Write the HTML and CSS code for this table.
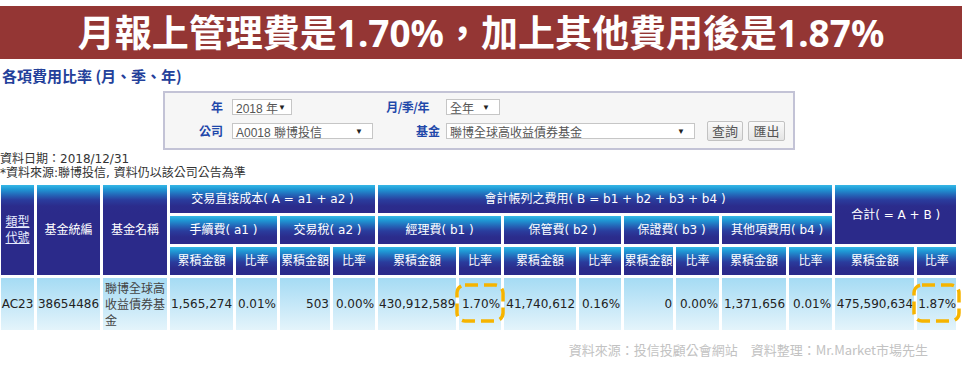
FILE: index.html
```html
<!DOCTYPE html>
<html lang="zh-Hant">
<head>
<meta charset="utf-8">
<title>各項費用比率</title>
<link rel="stylesheet" href="styles.css">
</head>
<body>
<div class="titlebar">月報上管理費是1.70%，加上其他費用後是1.87%</div>
<h2 class="heading">各項費用比率 (月、季、年)</h2>
<div class="formbox">
  <span class="flabel">年</span>
  <div><div class="sel sel-year"><span>2018 年</span><i>▼</i></div></div>
  <span class="flabel flabel-period">月/季/年</span>
  <div><div class="sel sel-period"><span>全年</span><i>▼</i></div></div>
  <span class="flabel">公司</span>
  <div><div class="sel sel-company"><span>A0018 聯博投信</span><i>▼</i></div></div>
  <span class="flabel flabel-fund">基金</span>
  <div class="fund-row">
    <div class="sel sel-fund"><span>聯博全球高收益債券基金</span><i>▼</i></div>
    <button class="btn btn-query">查詢</button>
    <button class="btn btn-export">匯出</button>
  </div>
</div>
<div class="meta">
  <div>資料日期：2018/12/31</div>
  <div>*資料來源:聯博投信, 資料仍以該公司公告為準</div>
</div>
<div class="table-wrap">
  <table class="fees"><colgroup><col class="c33"><col class="c63"><col class="c64"><col class="c63"><col class="c41"><col class="c50"><col class="c42"><col class="c78"><col class="c42"><col class="c72"><col class="c42"><col class="c49"><col class="c43"><col class="c64"><col class="c43"><col class="c79"><col class="c41"></colgroup><thead><tr><th rowspan="3"><a class="hlink" href="#">類型<br>代號</a></th><th rowspan="3">基金統編</th><th rowspan="3">基金名稱</th><th colspan="4">交易直接成本( A = a1 + a2 )</th><th colspan="8">會計帳列之費用( B = b1 + b2 + b3 + b4 )</th><th colspan="2" rowspan="2">合計( = A + B )</th></tr><tr><th colspan="2">手續費( a1 )</th><th colspan="2">交易稅( a2 )</th><th colspan="2">經理費( b1 )</th><th colspan="2">保管費( b2 )</th><th colspan="2">保證費( b3 )</th><th colspan="2">其他項費用( b4 )</th></tr><tr><th>累積金額</th><th>比率</th><th>累積金額</th><th>比率</th><th>累積金額</th><th>比率</th><th>累積金額</th><th>比率</th><th>累積金額</th><th>比率</th><th>累積金額</th><th>比率</th><th>累積金額</th><th>比率</th><th>累積金額</th><th>比率</th></tr></thead><tbody><tr><td class="ctr">AC23</td><td class="ctr">38654486</td><td class="name">聯博全球高收益債券基金</td><td>1,565,274</td><td>0.01%</td><td>503</td><td>0.00%</td><td>430,912,589</td><td>1.70%</td><td>41,740,612</td><td>0.16%</td><td>0</td><td>0.00%</td><td>1,371,656</td><td>0.01%</td><td>475,590,634</td><td>1.87%</td></tr></tbody></table>
  <svg class="mark mark-1" width="50" height="40" viewBox="0 0 50 40"><rect x="2" y="2" width="46" height="36" rx="8" ry="8" fill="none" stroke="#f6b400" stroke-width="3.5" stroke-dasharray="13 6"/></svg>
  <svg class="mark mark-2" width="49" height="40" viewBox="0 0 49 40"><rect x="2" y="2" width="45" height="36" rx="8" ry="8" fill="none" stroke="#f6b400" stroke-width="3.5" stroke-dasharray="13 6"/></svg>
</div>
<div class="footer">資料來源：投信投顧公會網站　資料整理：Mr.Market市場先生</div>
</body>
</html>
```

FILE: styles.css
```css
* { box-sizing: border-box; }
html, body { margin: 0; padding: 0; background: #fff; }
body {
  font-family: "DejaVu Sans", "Noto Sans CJK TC", sans-serif;
  font-size: 12px;
  color: #333;
}

.titlebar {
  margin-top: 6px;
  height: 53px;
  background: #943634;
  color: #fff;
  font-family: "Noto Sans", "Noto Sans CJK TC", sans-serif;
  font-weight: 700;
  font-size: 37px;
  line-height: 53px;
  text-align: center;
  white-space: nowrap;
}

.heading {
  margin: 9px 0 0 2px;
  font-family: "Noto Sans CJK TC", sans-serif;
  font-size: 15px;
  font-weight: 700;
  line-height: 16px;
  color: #23409a;
}

.formbox {
  margin: 7px 0 0 163px;
  width: 632px;
  border: 2px solid #c3c3d6;
  background: #f6f6f6;
  padding: 4px 0 7px;
  display: grid;
  grid-template-columns: 67px 152px 62px 1fr;
  grid-auto-rows: 20px;
  row-gap: 4px;
  align-items: center;
}
.flabel {
  display: flex;
  justify-content: flex-end;
  white-space: nowrap;
  padding-right: 9px;
  font-family: "Noto Sans CJK TC", sans-serif;
  font-weight: 700;
  font-size: 12px;
  color: #1f48aa;
  line-height: 20px;
}
.flabel-period { padding-right: 17px; letter-spacing: -0.5px; }
.flabel-fund { padding-right: 6px; }

.sel {
  height: 16px;
  border: 1px solid #c6c6c6;
  background: #fff;
  display: flex;
  align-items: center;
  justify-content: space-between;
  padding: 0 9px 0 3px;
  font-family: "Liberation Sans", "Noto Sans CJK TC", sans-serif;
  font-size: 12px;
  color: #555;
  white-space: nowrap;
}
.sel i { font-style: normal; font-size: 8px; color: #222; }
.sel-year { width: 60px; padding-right: 12px; }
.sel-period { width: 54px; }
.sel-company { width: 141px; }
.sel-fund { width: 249px; }

.fund-row { display: flex; align-items: center; }
.btn {
  height: 20px;
  padding: 0;
  border: 1px solid #c2c2c2;
  border-radius: 2px;
  background: linear-gradient(#fafafa, #e4e4e4);
  font-family: "Noto Sans CJK TC", sans-serif;
  font-size: 13px;
  line-height: 18px;
  color: #555;
}
.btn-query { width: 36px; margin-left: 12px; }
.btn-export { width: 37px; margin-left: 5px; }

.meta {
  margin-top: 2px;
  line-height: 14px;
  font-size: 12px;
  color: #333;
}

.table-wrap {
  position: relative;
  margin-top: 2px;
}
.fees {
  table-layout: fixed;
  width: 961px;
  border-collapse: separate;
  border-spacing: 3px;
  margin-left: -2px;
}
.c33 { width: 33px; } .c63 { width: 63px; } .c64 { width: 64px; } .c41 { width: 41px; }
.c50 { width: 50px; } .c42 { width: 42px; } .c78 { width: 78px; } .c72 { width: 72px; }
.c49 { width: 49px; } .c43 { width: 43px; } .c79 { width: 79px; }
.fees col:last-child { width: 39px; }

.fees th {
  height: 28px;
  padding: 0;
  color: #fff;
  font-weight: normal;
  font-size: 12px;
  white-space: nowrap;
  text-align: center;
  vertical-align: middle;
  background-color: #2b2a8a;
  background-image: linear-gradient(#36b8e6 0px, #1f9ad6 4px, #2465b7 10px, #2a3c9d 15px, #2b2c8c 21px, #2b2a8a 28px);
  background-repeat: no-repeat;
  background-size: 100% 28px;
  line-height: 16px;
}
.hlink { color: #e8ecff; text-decoration: underline; }

.fees td {
  height: 52px;
  padding: 0 1px;
  background: linear-gradient(#a5dbf4, #e4f4fb);
  font-size: 12px;
  color: #222;
  text-align: right;
  white-space: nowrap;
  line-height: 16px;
}
.fees td.ctr { text-align: center; padding: 0; }
.fees td.name {
  text-align: left;
  white-space: normal;
  font-family: "Noto Sans CJK TC", sans-serif;
  color: #444;
  padding: 0 2px;
}

.mark { position: absolute; top: 101px; }
.mark-1 { left: 455px; }
.mark-2 { left: 912px; }

.footer {
  margin-top: 8px;
  padding-right: 34px;
  text-align: right;
  font-family: "Noto Sans CJK TC", sans-serif;
  font-size: 13px;
  line-height: 18px;
  color: #c2c2c2;
  white-space: nowrap;
}
```
